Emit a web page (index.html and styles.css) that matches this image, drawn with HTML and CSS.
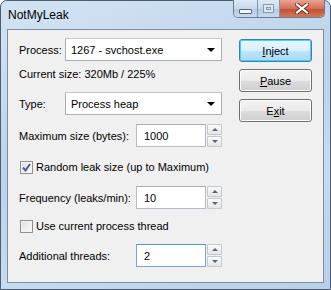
FILE: index.html
```html
<!DOCTYPE html>
<html lang="en">

<head>
    <meta charset="UTF-8">
    <title>NotMyLeak</title>
    <link rel="stylesheet" href="styles.css">
</head>

<body>
    <div class="window">
        <div class="titlebar">
            <span class="title">NotMyLeak</span>
            <div class="caption">
                <div class="cap cap-min"><span class="glyph-min"></span></div>
                <div class="cap cap-max"><span class="glyph-max"></span></div>
                <div class="cap cap-close">
                    <svg width="14" height="11" viewBox="0 0 14 11">
                        <path d="M2 1.5 L12 9.5 M12 1.5 L2 9.5" stroke="#6a2d22" stroke-width="4" stroke-linecap="square" />
                        <path d="M2 1.5 L12 9.5 M12 1.5 L2 9.5" stroke="#fff" stroke-width="2.2" stroke-linecap="square" />
                    </svg>
                </div>
            </div>
        </div>

        <div class="client">
            <div class="form">
                <div class="row row-combo">
                    <label class="lbl lbl-short">Process:</label>
                    <div class="combo"><span>1267 - svchost.exe</span><i class="arrow"></i></div>
                </div>
                <div class="row row-text">Current size: 320Mb / 225%</div>
                <div class="row row-type">
                    <label class="lbl lbl-short">Type:</label>
                    <div class="combo"><span>Process heap</span><i class="arrow"></i></div>
                </div>
                <div class="row row-max">
                    <label class="lbl lbl-long">Maximum size (bytes):</label>
                    <div class="edit">1000</div>
                    <div class="spin"><div class="spin-btn"><i class="up"></i></div><div class="spin-btn"><i class="down"></i></div></div>
                </div>
                <div class="row row-check">
                    <span class="check checked">
                        <svg width="9" height="9" viewBox="0 0 9 9"><path d="M1 4.5 L3.5 7.5 L8 1" fill="none" stroke="#4a5f97" stroke-width="2" /></svg>
                    </span>
                    Random leak size (up to Maximum)
                </div>
                <div class="row row-freq">
                    <label class="lbl lbl-long">Frequency (leaks/min):</label>
                    <div class="edit">10</div>
                    <div class="spin"><div class="spin-btn"><i class="up"></i></div><div class="spin-btn"><i class="down"></i></div></div>
                </div>
                <div class="row row-check2">
                    <span class="check"></span>
                    Use current process thread
                </div>
                <div class="row row-threads">
                    <label class="lbl lbl-long">Additional threads:</label>
                    <div class="edit edit-focus">2</div>
                    <div class="spin"><div class="spin-btn"><i class="up"></i></div><div class="spin-btn"><i class="down"></i></div></div>
                </div>
            </div>

            <div class="actions">
                <button class="btn btn-default"><u>I</u>nject</button>
                <button class="btn"><u>P</u>ause</button>
                <button class="btn">E<u>x</u>it</button>
            </div>
        </div>
    </div>
</body>

</html>
```

FILE: styles.css
```css
* {
    box-sizing: border-box;
}

body {
    margin: 0;
    font-family: "Liberation Sans", Arial, sans-serif;
    font-size: 11px;
    color: #000;
}

.window {
    width: 331px;
    height: 290px;
    border: 1px solid #4c5d73;
    border-radius: 7px 7px 0 0;
    background: linear-gradient(160deg, #d3e3f3 0%, #bcd3ea 45%, #c6dbef 70%, #b8cfe8 100%);
    padding: 0 6px 6px 6px;
    display: flex;
    flex-direction: column;
}

.titlebar {
    height: 28px;
    display: flex;
    align-items: flex-start;
    justify-content: space-between;
}

.title {
    font-size: 12px;
    margin: 7px 0 0 1px;
}

.caption {
    display: flex;
    height: 18px;
    margin-top: -1px;
    margin-right: -1px;
    border: 1px solid #6b7a90;
    border-top: none;
    border-radius: 0 0 5px 5px;
    overflow: hidden;
}

.cap {
    height: 100%;
    display: flex;
    align-items: center;
    justify-content: center;
    background: linear-gradient(#dfe9f5 0%, #c8d8ea 50%, #b4c8e0 51%, #c7d9ee 100%);
    border-right: 1px solid #8496ad;
}

.cap-min {
    width: 24px;
}

.cap-max {
    width: 22px;
}

.cap-close {
    width: 44px;
    border-right: none;
    background: linear-gradient(#e8a493 0%, #d56f57 50%, #c24a30 51%, #d27b5c 100%);
}

.glyph-min {
    width: 13px;
    height: 5px;
    margin-top: 5px;
    border: 1px solid #55657b;
    border-radius: 1px;
    background: #f3f6fa;
}

.glyph-max {
    width: 11px;
    height: 9px;
    border: 1px solid #8a9bb0;
    box-shadow: inset 0 0 0 2px #dbe5f0, inset 0 0 0 3px #8a9bb0;
}

.client {
    flex: 1;
    background: #f0f0f0;
    border: 1px solid #7d8ea4;
    padding: 8px 10px 0 11px;
    display: flex;
    gap: 17px;
}

.form {
    width: 203px;
    display: flex;
    flex-direction: column;
}

.row {
    display: flex;
    align-items: center;
    white-space: nowrap;
}

.row-combo {
    height: 23px;
}

.row-text {
    height: 16px;
    margin-top: 5px;
}

.row-type {
    height: 23px;
    margin-top: 10px;
}

.row-max {
    height: 23px;
    margin-top: 9px;
}

.row-check {
    height: 16px;
    margin-top: 12px;
}

.row-freq {
    height: 23px;
    margin-top: 11px;
}

.row-check2 {
    height: 16px;
    margin-top: 9px;
}

.row-threads {
    height: 23px;
    margin-top: 10px;
}

.lbl-short {
    width: 46px;
}

.lbl-long {
    width: 117px;
}

.combo {
    flex: 1;
    height: 100%;
    background: #fff;
    border: 1px solid #a9afb8;
    border-top-color: #c3c6cb;
    border-radius: 1px;
    display: flex;
    align-items: center;
    padding: 0 6px 0 5px;
}

.combo span {
    flex: 1;
}

.arrow {
    width: 0;
    height: 0;
    border-left: 4px solid transparent;
    border-right: 4px solid transparent;
    border-top: 4px solid #000;
    margin-top: 1px;
}

.edit {
    width: 70px;
    height: 100%;
    background: #fff;
    border: 1px solid #b6bcc4;
    border-top-color: #abadb3;
    padding: 0 0 0 7px;
    display: flex;
    align-items: center;
}

.edit-focus {
    border-color: #7ea4cc;
    border-top-color: #5c93c9;
}

.spin {
    width: 15px;
    height: 100%;
    margin-left: 1px;
    display: flex;
    flex-direction: column;
    gap: 1px;
}

.spin-btn {
    flex: 1;
    border: 1px solid #c4c9d0;
    border-radius: 1px;
    background: linear-gradient(#fafafa, #e6e6e6);
    display: flex;
    align-items: center;
    justify-content: center;
}

.up,
.down {
    width: 0;
    height: 0;
    border-left: 3px solid transparent;
    border-right: 3px solid transparent;
}

.up {
    border-bottom: 3px solid #56657c;
}

.down {
    border-top: 3px solid #56657c;
}

.check {
    width: 13px;
    height: 13px;
    margin: 0 3px 0 1px;
    border: 1px solid #8f8f8f;
    background: linear-gradient(135deg, #e0e0e0, #fcfcfc);
    box-shadow: inset 0 0 0 1px #f4f4f4;
    display: flex;
    align-items: center;
    justify-content: center;
}

.actions {
    display: flex;
    flex-direction: column;
    gap: 7px;
    padding-top: 1px;
}

.btn {
    width: 73px;
    height: 23px;
    border: 1px solid #707070;
    border-radius: 3px;
    background: linear-gradient(#f2f2f2 0%, #ebebeb 50%, #dddddd 51%, #cfcfcf 100%);
    box-shadow: inset 0 0 0 1px #fcfcfc;
    font-family: "Liberation Sans", Arial, sans-serif;
    font-size: 11px;
    color: #000;
    padding: 0;
}

.btn-default {
    border-color: #3c7fb1;
    background: linear-gradient(#eaf6fd 0%, #d9f0fc 50%, #bee6fd 51%, #a7d9f5 100%);
    box-shadow: inset 0 0 0 1px #48d0f7;
}
```
